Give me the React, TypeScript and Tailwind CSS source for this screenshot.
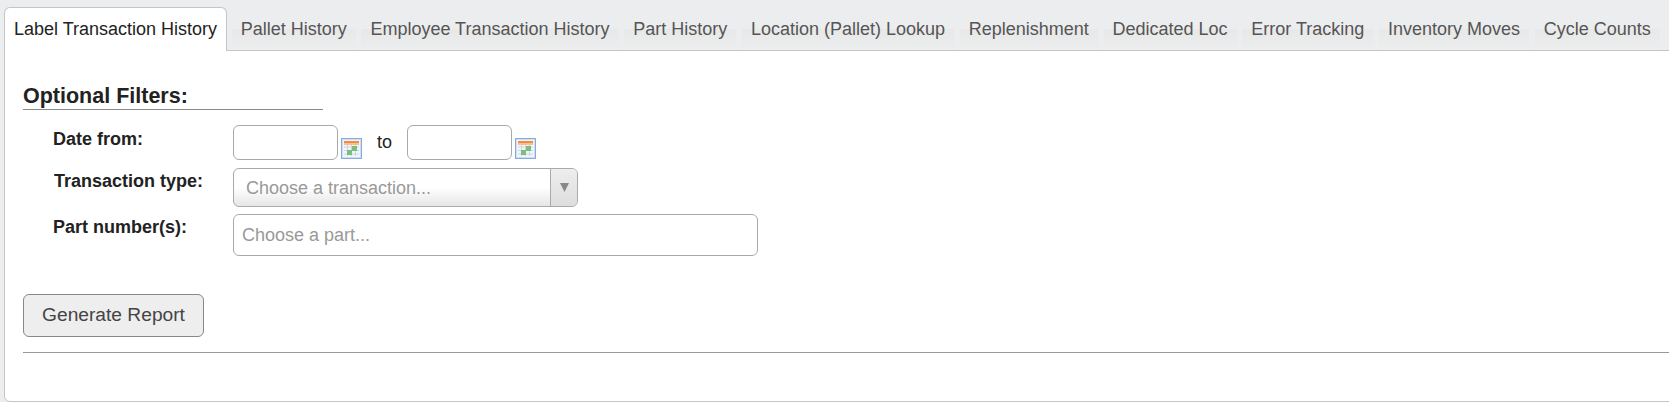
const tabs = [
  'Pallet History',
  'Employee Transaction History',
  'Part History',
  'Location (Pallet) Lookup',
  'Replenishment',
  'Dedicated Loc',
  'Error Tracking',
  'Inventory Moves',
  'Cycle Counts',
];

function CalendarIcon() {
  return (
    <svg width="21" height="21" viewBox="0 0 21 21" className="shrink-0">
      <rect x="0.5" y="0.5" width="20" height="20" fill="#cfdff3" stroke="#86acdb" />
      <rect x="2" y="2" width="17" height="17" fill="#f2f6fb" />
      <rect x="3" y="3" width="15" height="2" fill="#f58a45" />
      <rect x="3" y="5" width="15" height="2" fill="#fbbf8a" />
      <path d="M3 9h15M3 12.500h15M3 16h15M6.500 7v11M10.500 7v11M14.500 7v11" stroke="#c9d6e6" strokeWidth="1" fill="none" />
      <rect x="11" y="8" width="5" height="5" fill="#7dbd7d" />
      <rect x="6" y="12" width="5" height="5" fill="#7dbd7d" />
    </svg>
  );
}

export default function App() {
  const labelClass = 'w-[210px] pl-[30px] text-[18px] leading-[20px] font-bold text-[#222]';
  return (
    <div className="h-[402px] w-[1669px] overflow-hidden bg-[#ecedee] pl-1 font-['Liberation_Sans',Arial,sans-serif] text-[18px] text-[#222]">
      <div className="relative z-10 flex h-[51px] items-end gap-[5.700px] pr-2">
        <div className="mr-[-1px] flex h-[44px] w-[223px] items-start rounded-t-[6px] border border-b-0 border-[#c5c5c5] bg-white pt-[11px] pl-[9px] leading-[20px] text-[#222] whitespace-nowrap">
          Label Transaction History
        </div>
        {tabs.map((tab) => (
          <div key={tab} className="relative h-[22px] border-b border-[#c5c5c5] bg-gradient-to-b from-[#e8e8e8] to-[#ecedee] px-[9px] whitespace-nowrap text-[#555]">
            <span className="relative top-[-13px] leading-[20px]">{tab}</span>
          </div>
        ))}
      </div>
      <div className="-mt-px mr-[-12px] h-[352px] rounded-br-[6px] rounded-bl-[6px] border border-[#c5c5c5] bg-white pt-[33px] pl-[18px]">
        <div className="w-[300px] border-b border-[#8a8a8a] pb-[1px] text-[21.500px] leading-[24px] font-bold text-[#222]">Optional Filters:</div>
        <div className="mt-[16px] flex">
          <div className={labelClass + ' pt-[3px]'}>Date from:</div>
          <div className="-mt-[1px] flex items-start">
            <div className="h-[35px] w-[105px] rounded-[6px] border border-[#aaa] bg-white" />
            <div className="mt-[13px] ml-[3px]"><CalendarIcon /></div>
            <span className="mt-[7px] ml-[15px] leading-[20px]">to</span>
            <div className="ml-[15px] h-[35px] w-[105px] rounded-[6px] border border-[#aaa] bg-white" />
            <div className="mt-[13px] ml-[3px]"><CalendarIcon /></div>
          </div>
        </div>
        <div className="mt-[8px] flex">
          <div className={labelClass + ' pt-[3px]'}><span className="ml-[1px]">Transaction type:</span></div>
          <div className="flex h-[39px] w-[345px] overflow-hidden rounded-[6px] border border-[#aaa] bg-gradient-to-b from-white from-50% to-[#e6e6e6] text-[#999]">
            <div className="flex flex-1 items-center pt-[1px] pl-[12px]">Choose a transaction...</div>
            <div className="flex w-[27px] items-center justify-center border-l border-[#aaa] bg-gradient-to-b from-[#eee] to-[#ddd]">
              <svg width="9" height="9" viewBox="0 0 9 9"><path d="M0 0h9L4.500 9z" fill="#888" /></svg>
            </div>
          </div>
        </div>
        <div className="mt-[7px] flex">
          <div className={labelClass + ' pt-[3px]'}>Part number(s):</div>
          <div className="flex h-[42px] w-[525px] items-center rounded-[6px] border border-[#aaa] bg-white pl-[8px] text-[#999]">Choose a part...</div>
        </div>
        <button className="mt-[38px] block h-[43px] w-[181px] rounded-[6px] border border-[#888] bg-[#eeeeee] text-[19.200px] text-[#444]">Generate Report</button>
        <div className="mt-[15px] border-t border-[#999]" />
      </div>
    </div>
  );
}
